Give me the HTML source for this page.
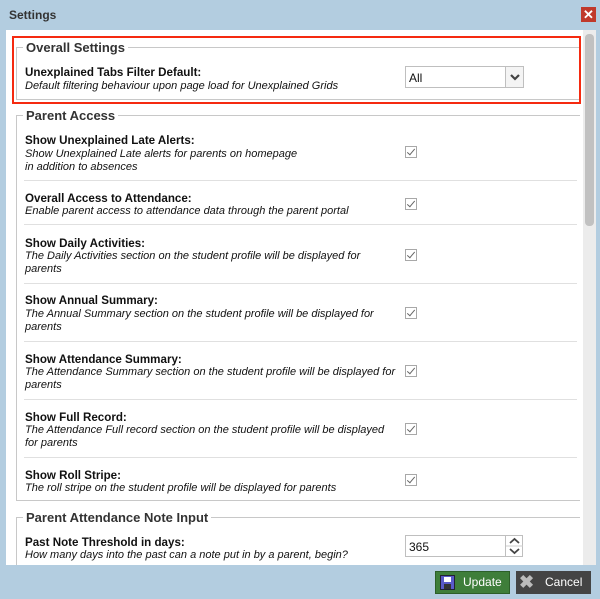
<!DOCTYPE html>
<html><head><style>
*{margin:0;padding:0;box-sizing:border-box}
body{width:600px;height:599px;background:#b3cde0;position:relative;overflow:hidden;font-family:"Liberation Sans",sans-serif;color:#111}
.a{position:absolute}
.t{font-weight:bold;font-size:11.6px;white-space:nowrap}
.d{font-style:italic;font-size:11px;line-height:13px;white-space:nowrap}
.lg{font-weight:bold;font-size:13px;color:#333;background:#fff;padding:0 3px}
.hl{height:1px;background:#c8c8c8}
.vl{width:1px;background:#c8c8c8}
.sep{height:1px;background:#e0e0e0;left:24px;width:553px}
.cb{width:12px;height:12px;border:1px solid #a8a8a8;background:#fff;left:405px}
.cb:after{content:"";position:absolute;left:3px;top:0px;width:3px;height:7px;border:solid #666;border-width:0 1px 1px 0;transform:rotate(40deg)}
</style></head><body>
<div class="a" style="left:9px;top:8px;font-weight:bold;font-size:12px;color:#333">Settings</div>
<div class="a" style="left:581px;top:7px;width:15px;height:15px;background:#c0392b;color:#fff;font-size:13px;line-height:15px;text-align:center;font-weight:bold">✕</div>
<div class="a" style="left:6px;top:30px;width:577px;height:535px;background:#fff"></div>
<div class="a" style="left:583px;top:30px;width:13px;height:535px;background:#ececec"></div>
<div class="a" style="left:585px;top:34px;width:9px;height:192px;background:#c1c1c1;border-radius:4px"></div>

<div class="a hl" style="left:16px;top:47px;width:564px"></div>
<div class="a vl" style="left:16px;top:47px;height:53px"></div>
<div class="a hl" style="left:16px;top:99px;width:564px"></div>
<div class="a lg" style="left:23px;top:40px">Overall Settings</div>
<div class="a" style="left:12px;top:36px;width:569px;height:68px;border:2px solid #f52a10"></div>
<div class="a t" style="left:25px;top:66px">Unexplained Tabs Filter Default:</div>
<div class="a d" style="left:25px;top:80px">Default filtering behaviour upon page load for Unexplained Grids</div>
<div class="a" style="left:405px;top:66px;width:119px;height:22px;border:1px solid #bfbfbf;background:#fff"><span style="position:absolute;left:3px;top:4px;font-size:12px">All</span><div style="position:absolute;right:0;top:0;width:18px;height:20px;border-left:1px solid #bfbfbf;background:#f4f4f4"><svg width="18" height="20" style="position:absolute;left:0;top:0"><path d="M5 8 L9 12 L13 8" fill="none" stroke="#444" stroke-width="2.2"/></svg></div></div>

<div class="a hl" style="left:16px;top:115px;width:564px"></div>
<div class="a vl" style="left:16px;top:115px;height:386px"></div>
<div class="a hl" style="left:16px;top:500px;width:564px"></div>
<div class="a lg" style="left:23px;top:108px">Parent Access</div>

<div class="a t" style="left:25px;top:134px">Show Unexplained Late Alerts:</div>
<div class="a d" style="left:25px;top:148px">Show Unexplained Late alerts for parents on homepage<br>in addition to absences</div>
<div class="a cb" style="top:146px"></div>
<div class="a sep" style="top:180px"></div>

<div class="a t" style="left:25px;top:192px">Overall Access to Attendance:</div>
<div class="a d" style="left:25px;top:205px">Enable parent access to attendance data through the parent portal</div>
<div class="a cb" style="top:198px"></div>
<div class="a sep" style="top:224px"></div>

<div class="a t" style="left:25px;top:237px">Show Daily Activities:</div>
<div class="a d" style="left:25px;top:250px">The Daily Activities section on the student profile will be displayed for<br>parents</div>
<div class="a cb" style="top:249px"></div>
<div class="a sep" style="top:283px"></div>

<div class="a t" style="left:25px;top:294px">Show Annual Summary:</div>
<div class="a d" style="left:25px;top:308px">The Annual Summary section on the student profile will be displayed for<br>parents</div>
<div class="a cb" style="top:307px"></div>
<div class="a sep" style="top:341px"></div>

<div class="a t" style="left:25px;top:353px">Show Attendance Summary:</div>
<div class="a d" style="left:25px;top:366px">The Attendance Summary section on the student profile will be displayed for<br>parents</div>
<div class="a cb" style="top:365px"></div>
<div class="a sep" style="top:399px"></div>

<div class="a t" style="left:25px;top:411px">Show Full Record:</div>
<div class="a d" style="left:25px;top:424px">The Attendance Full record section on the student profile will be displayed<br>for parents</div>
<div class="a cb" style="top:423px"></div>
<div class="a sep" style="top:457px"></div>

<div class="a t" style="left:25px;top:469px">Show Roll Stripe:</div>
<div class="a d" style="left:25px;top:482px">The roll stripe on the student profile will be displayed for parents</div>
<div class="a cb" style="top:474px"></div>

<div class="a hl" style="left:16px;top:517px;width:564px"></div>
<div class="a vl" style="left:16px;top:517px;height:48px"></div>
<div class="a lg" style="left:23px;top:510px">Parent Attendance Note Input</div>
<div class="a t" style="left:25px;top:536px">Past Note Threshold in days:</div>
<div class="a d" style="left:25px;top:549px">How many days into the past can a note put in by a parent, begin?</div>
<div class="a" style="left:405px;top:535px;width:118px;height:22px;border:1px solid #bfbfbf;background:#fff"><span style="position:absolute;left:3px;top:4px;font-size:12px">365</span><div style="position:absolute;right:0;top:0;width:17px;height:20px;border-left:1px solid #bfbfbf;background:#fff"><svg width="17" height="20" style="position:absolute;left:0;top:0"><path d="M4 7 L8.5 3 L13 7 M4 13 L8.5 17 L13 13" fill="none" stroke="#444" stroke-width="1.8"/><path d="M0 10 H17" stroke="#ccc"/></svg></div></div>

<div class="a" style="left:435px;top:571px;width:75px;height:23px;background:#3e7e3a;border:1px solid #2c5f29;color:#fff;font-size:12px;line-height:21px"><span style="position:absolute;left:4px;top:3px;width:15px;height:15px;background:#5a5ac8;border:1px solid #223"><span style="position:absolute;left:3px;top:1px;width:7px;height:5px;background:#fff"></span><span style="position:absolute;left:3px;top:8px;width:7px;height:5px;background:#333"></span></span><span style="position:absolute;left:27px">Update</span></div>
<div class="a" style="left:516px;top:571px;width:75px;height:23px;background:#444;color:#fff;font-size:12px;line-height:23px"><span style="position:absolute;left:3px;top:0;font-size:18px;color:#bbb;font-weight:bold">✖</span><span style="position:absolute;left:29px">Cancel</span></div>
</body></html>
